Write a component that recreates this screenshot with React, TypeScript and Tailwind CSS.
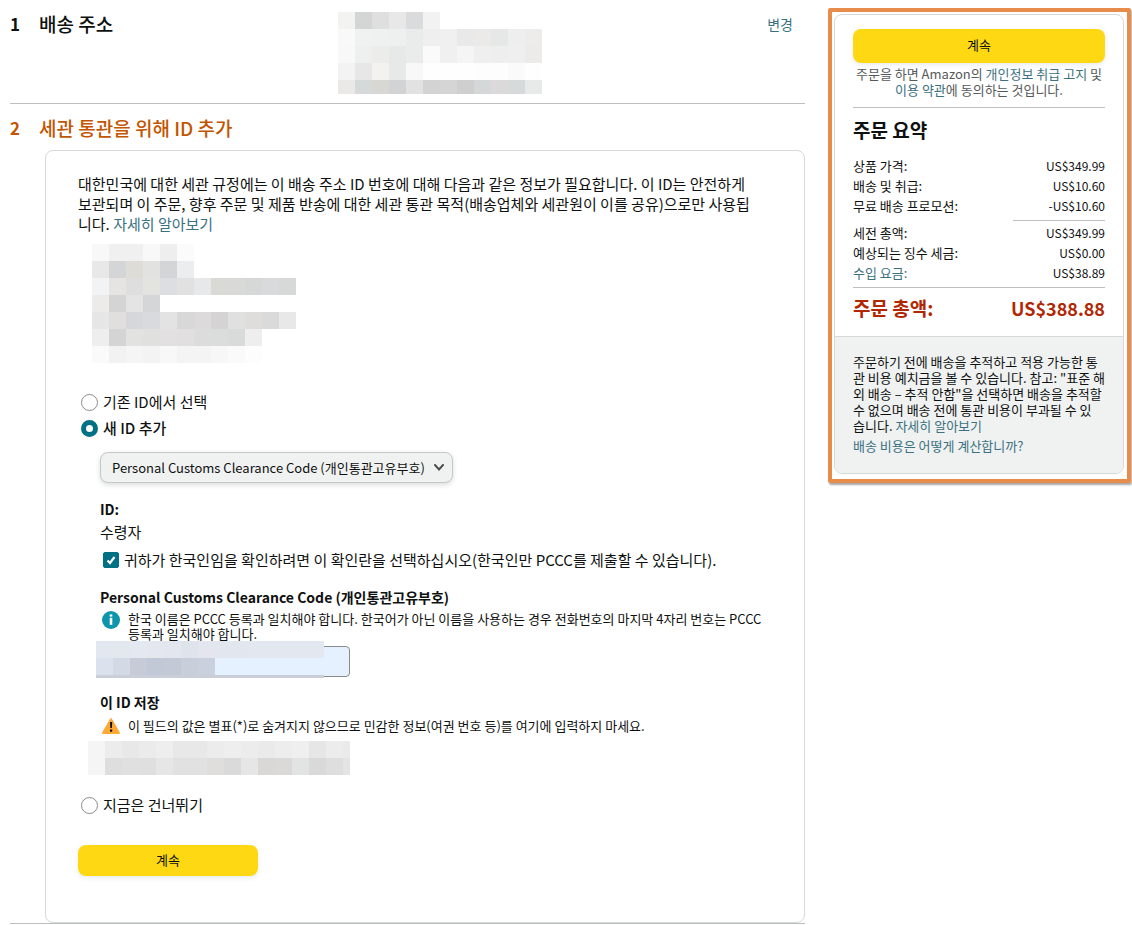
import { useState } from "react";

// one string per row, "." is an empty cell
const addressBlocks = [
  "f3f3f2 d4d6d6 dfdfdf e8e8e8 d9dbdc f2f2f2 . . . . . .",
  "f9f9f9 f0f1f1 eff0f0 eeefef eaebeb efefef f0f0f0 e9e9e9 ebeae8 e6e7e7 eeeeee edecea",
  "f8f8f8 eeefef ececea e7e8e8 eaecec fafafa f0f0f0 f5f5f5 efefef eeeeee efefef ecebea",
  "f3f3f3 e7e7e7 f3f2ee e7e8e8 f8f8f8 fefefe fefefe fefefe fdfdfd fdfdfd fafafa fefefe",
  "eae9e8 d6d9da d8d7d4 d2d3d4 e2e2e2 d3d3d3 d5d5d5 cfcfcf d5d8d9 dcd9da d7dadb e8e9e9",
];

const recipientBlocks = [
  "f8f8f8 f0f0f0 f0f0f0 f8f8f8 eeeeee fbfbfb . . . . . .",
  "e8e8e8 d3d5d6 dddcd7 e2e2e1 d4d5d7 ecedef . . . . . .",
  "f2f3f5 e5e4e2 dedede e3e3e0 dcdee1 e1e1e1 e7e8ea d9d9d5 d9dad7 d6d7d7 d9dadc d7d8d8",
  "ecebea d4d4d4 e4e4e4 d4d6d8 . . . . . . . .",
  "e6e6e6 e1dfde d5d7db d9dade e3e3e3 d9d8d9 dcdadb d5d3d4 e0e0e0 dedddb dadada e8e8e8",
  "eeeeee d5d4d4 e2e2e0 e0e0df e2e0e0 e1dfe0 dcdcdc dbdddd d8dbda eeeeee . .",
  "fafafa f2f2f2 f5f5f5 f3f3f3 f8f8f8 f4f4f4 f4f4f4 f7f7f7 fafafa fdfdfd . .",
];

const codeBlocks = [
  "e3e7ef e3e7ee e4e8f0 e4e7ed e3e6ee dfe3eb e3e6ee e2e6ef e2e6ef e2e7f0 e2e7f0 e2e7f0 e2e7f0 e3e7f0",
  "dbe2ed d3dae5 c6cbd7 c0c9d5 c3cad6 c9cedb cad0dd e6f1ff e6f1ff e6f1ff e6f1ff e6f1ff e6f1ff e6f1ff",
];

const savedBlocks = [
  "f5f5f5 ececec e8e8e8 ebebeb eeeeee e8e8e8 e8e8e8 ececec eeeeee ececec eaeaea ededed efefef e6e6e6 ececec eaeaea",
  "f5f5f5 dedede e1e0e1 dfdfdf e6e6e6 e0e1e0 e0e1e0 e0dddd dadada e6e6e6 d9d8d7 dad9d7 e2e3e3 dad9d9 dedede e4e4e4",
];

const link = "text-[#3b7180] hover:underline";
const yellowButton =
  "block rounded-lg bg-[#ffd814] pb-[2px] text-[13px] text-[#0f1111] shadow-[0_2px_5px_rgba(213,217,217,0.5)] hover:bg-[#f7ca00]";

function Blocks({ rows }: { rows: string[] }) {
  return (
    <div aria-hidden="true">
      {rows.map((row, i) => (
        <div key={i} className="flex">
          {row.split(" ").map((c, j) => (
            <span
              key={j}
              className="size-[17px] shrink-0"
              style={{ backgroundColor: c === "." ? "transparent" : "#" + c }}
            />
          ))}
        </div>
      ))}
    </div>
  );
}

function Radio({ value, text, picked, onPick }: { value: string; text: string; picked: string; onPick: (v: string) => void }) {
  const on = picked === value;
  return (
    <label className="ml-[3px] flex items-center gap-[5px] leading-5">
      <input
        type="radio"
        name="idChoice"
        value={value}
        checked={on}
        onChange={() => onPick(value)}
        className="size-[17px] shrink-0 appearance-none rounded-full border border-[#888c8c] bg-white checked:border-[5px] checked:border-[#007185]"
      />
      <span className={on ? "font-medium" : ""}>{text}</span>
    </label>
  );
}

function SummaryRow({ name, price, href }: { name: string; price: string; href?: string }) {
  return (
    <tr>
      <th scope="row" className="p-0 text-left font-normal">
        {href ? <a href={href} className={link}>{name}</a> : name}
      </th>
      <td className="p-0 text-right text-[12px] leading-5">{price}</td>
    </tr>
  );
}

export default function App() {
  const [choice, setChoice] = useState("new");
  const [korean, setKorean] = useState(true);
  const [code, setCode] = useState("");

  return (
    <div className="flex items-start gap-[23px] bg-white pl-[10px] font-['Noto_Sans_CJK_KR',sans-serif] text-[15px] leading-5 text-[#0f1111]">
      <main className="min-w-0 flex-1 border-b border-[#bbbfbf]">
        {/* step 1 */}
        <section className="flex h-[104px] items-start border-b border-[#bbbfbf] pt-3">
          <h2 className="flex w-[328px] text-[19px] leading-6 font-medium">
            <span className="w-[29px] text-[17px] font-bold">1</span>배송 주소
          </h2>
          <div className="h-[82px] overflow-hidden">
            <Blocks rows={addressBlocks} />
          </div>
          <a href="#address" className={`${link} mr-3 ml-auto text-[14px] leading-6`}>변경</a>
        </section>

        {/* step 2 */}
        <section>
          <h2 className="flex pt-3 text-[19px] leading-6 font-medium text-[#c45500]">
            <span className="w-[29px] text-[17px] font-bold">2</span>세관 통관을 위해 ID 추가
          </h2>
          <form
            onSubmit={(e) => e.preventDefault()}
            className="mt-[10px] ml-[35px] rounded-lg border border-[#d5d9d9] px-8 pt-[23px] pb-[46px]"
          >
            <p>
              대한민국에 대한 세관 규정에는 이 배송 주소 ID 번호에 대해 다음과 같은 정보가 필요합니다. 이 ID는 안전하게
              <br />
              보관되며 이 주문, 향후 주문 및 제품 반송에 대한 세관 통관 목적(배송업체와 세관원이 이를 공유)으로만 사용됩
              <br />
              니다. <a href="#customs" className={link}>자세히 알아보기</a>
            </p>
            <div className="mt-[10px] mb-[29px] ml-[14px]">
              <Blocks rows={recipientBlocks} />
            </div>

            <div className="flex flex-col gap-[6px]">
              <Radio value="old" text="기존 ID에서 선택" picked={choice} onPick={setChoice} />
              <Radio value="new" text="새 ID 추가" picked={choice} onPick={setChoice} />
            </div>

            <div className="mt-[14px] ml-[22px]">
              <div className="relative w-[353px]">
                <select
                  aria-label="ID 유형"
                  className="block h-[31px] w-full appearance-none rounded-lg border border-[#c4c8c8] bg-[#f0f2f2] pl-[11px] text-[13px] shadow-[0_2px_5px_rgba(15,17,17,0.15)]"
                >
                  <option>Personal Customs Clearance Code (개인통관고유부호)</option>
                </select>
                <svg viewBox="0 0 10 7" className="pointer-events-none absolute top-3 right-[9px] h-[7px] w-[10px]">
                  <path d="M1 1l4 4.5L9 1" fill="none" stroke="#4a4f4f" strokeWidth="2" strokeLinecap="round" />
                </svg>
              </div>

              <p className="mt-4 text-[14px] font-bold">ID:</p>
              <p className="mt-[3px]">수령자</p>
              <label className="mt-2 ml-[3px] flex items-center gap-[5px]">
                <span className="relative size-4 shrink-0">
                  <input
                    type="checkbox"
                    checked={korean}
                    onChange={(e) => setKorean(e.target.checked)}
                    className="block size-4 appearance-none rounded-xs border border-[#888c8c] checked:border-[#007185] checked:bg-[#007185]"
                  />
                  {korean && (
                    <svg viewBox="0 0 16 16" className="pointer-events-none absolute inset-0">
                      <path d="M4.5 8.5l2.5 2.5L11.5 5" fill="none" stroke="#fff" strokeWidth="2.2" />
                    </svg>
                  )}
                </span>
                귀하가 한국인임을 확인하려면 이 확인란을 선택하십시오(한국인만 PCCC를 제출할 수 있습니다).
              </label>

              <label htmlFor="pccc" className="mt-[17px] block text-[14px] font-bold">
                Personal Customs Clearance Code (개인통관고유부호)
              </label>
              <div className="mt-1 flex gap-2 text-[13px] leading-[15px]">
                <svg viewBox="0 0 18 18" className="ml-[2px] size-[18px] shrink-0">
                  <circle cx="9" cy="9" r="9" fill="#0f95ab" />
                  <rect x="7.7" y="3.4" width="2.6" height="2.2" fill="#fff" />
                  <path d="M7.7 6.8h2.6v7H7.7z" fill="#fff" />
                </svg>
                <p>
                  한국 이름은 PCCC 등록과 일치해야 합니다. 한국어가 아닌 이름을 사용하는 경우 전화번호의 마지막 4자리
                  번호는 PCCC 등록과 일치해야 합니다.
                </p>
              </div>
              <div className="relative mt-[5px] w-[250px]">
                <input
                  id="pccc"
                  type="text"
                  value={code}
                  onChange={(e) => setCode(e.target.value)}
                  className="block h-[31px] w-full rounded-[4px] border border-[#888c8c] bg-[#e6f1ff] px-2"
                />
                <div className="pointer-events-none absolute -top-[5px] -left-1 w-[228px] overflow-hidden border-b-[3px] border-[#c9ced8]">
                  <Blocks rows={codeBlocks} />
                </div>
              </div>

              <p className="mt-[15px] text-[14px] font-bold">이 ID 저장</p>
              <div className="mt-1 flex items-center gap-2 text-[13px]">
                <svg viewBox="0 0 18 16" className="ml-[2px] h-4 w-[18px] shrink-0">
                  <path d="M9 1.2L17 15H1z" fill="#ffa936" stroke="#ffa936" strokeWidth="2" strokeLinejoin="round" />
                  <path d="M8 4h2.2l-.3 6H8.3zM8 11.5h2.2v2.2H8z" fill="#111" />
                </svg>
                이 필드의 값은 별표(*)로 숨겨지지 않으므로 민감한 정보(여권 번호 등)를 여기에 입력하지 마세요.
              </div>
            </div>
            <div className="mt-[5px] mb-5 ml-[10px] w-[262px] overflow-hidden">
              <Blocks rows={savedBlocks} />
            </div>

            <Radio value="skip" text="지금은 건너뛰기" picked={choice} onPick={setChoice} />
            <button type="submit" className={`${yellowButton} mt-[30px] h-[31px] w-[180px]`}>계속</button>
          </form>
        </section>
      </main>

      {/* order summary */}
      <aside className="mt-2 mr-px w-[303px] shrink-0 rounded-xs border-4 border-[#e78c4b] pt-[2px] pr-[3px] pb-[5px] pl-[2px] text-[13px] shadow-[1px_2px_2px_rgba(0,0,0,0.35)]">
        <div className="overflow-hidden rounded-lg border border-[#d5d9d9]">
          <div className="px-[18px] pt-[14px] pb-4">
            <button type="button" className={`${yellowButton} h-[34px] w-full`}>계속</button>
            <p className="mt-[3px] border-b border-[#bbbfbf] pb-[9px] text-center leading-4 text-[#565959]">
              주문을 하면 Amazon의 <a href="#privacy" className={link}>개인정보 취급 고지</a> 및<br />
              <a href="#terms" className={link}>이용 약관</a>에 동의하는 것입니다.
            </p>
            <h3 className="mt-[10px] text-[19px] leading-6 font-bold">주문 요약</h3>
            <table className="mt-[14px] w-full leading-5">
              <tbody>
                <SummaryRow name="상품 가격:" price="US$349.99" />
                <SummaryRow name="배송 및 취급:" price="US$10.60" />
                <SummaryRow name="무료 배송 프로모션:" price="-US$10.60" />
                <tr>
                  <td colSpan={2} className="p-0 pt-1 pb-[2px]">
                    <div className="ml-auto w-[92px] border-t border-[#bbbfbf]" />
                  </td>
                </tr>
                <SummaryRow name="세전 총액:" price="US$349.99" />
                <SummaryRow name="예상되는 징수 세금:" price="US$0.00" />
                <SummaryRow name="수입 요금:" price="US$38.89" href="#import" />
              </tbody>
            </table>
            <div className="mt-1 flex justify-between border-t border-[#bbbfbf] pt-2 text-[19px] leading-6 font-bold text-[#b12704]">
              <span>주문 총액:</span>
              <span className="text-[18px] leading-6">US$388.88</span>
            </div>
          </div>
          <div className="border-t border-[#d5d9d9] bg-[#f0f2f2] px-[18px] pt-[17px] pb-[19px] leading-4">
            <p>
              주문하기 전에 배송을 추적하고 적용 가능한 통관 비용 예치금을 볼 수 있습니다. 참고: "표준 해외 배송 – 추적
              안함"을 선택하면 배송을 추적할 수 없으며 배송 전에 통관 비용이 부과될 수 있<br />
              습니다. <a href="#tracking" className={link}>자세히 알아보기</a>
            </p>
            <a href="#shipping" className={`${link} mt-1 block`}>배송 비용은 어떻게 계산합니까?</a>
          </div>
        </div>
      </aside>
    </div>
  );
}
